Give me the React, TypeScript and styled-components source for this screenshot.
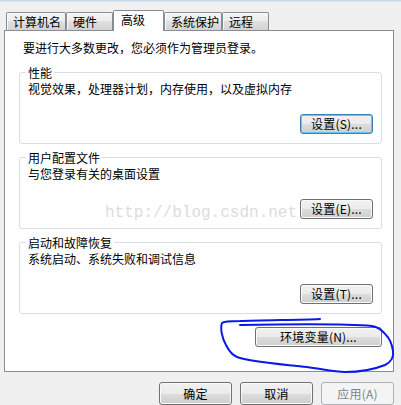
import React from "react";
import styled, { createGlobalStyle, css } from "styled-components";

const GlobalStyle = createGlobalStyle`
  html, body {
    margin: 0;
    padding: 0;
    background: #f0f0f0;
  }
  body {
    font-family: "Noto Sans CJK SC", "Noto Sans", sans-serif;
    font-size: 12px;
    color: #000;
  }
`;

const Frame = styled.div`
  position: relative;
  width: 401px;
  height: 405px;
  overflow: hidden;
  background: #f0f0f0;
  display: flex;
  flex-direction: column;
`;

const TitleBand = styled.div`
  height: 7px;
  background: linear-gradient(#bcd3ea, #e6edf5);
`;

const Body = styled.div`
  display: flex;
  flex-direction: column;
  padding: 0 7px 0 4px;
`;

const TabRow = styled.div`
  position: relative;
  z-index: 1;
  margin-top: 8px;
  padding-left: 2px;
  height: 21px;
  display: flex;
  align-items: flex-end;
`;

const Tab = styled.div<{ $w: number; $active?: boolean }>`
  box-sizing: border-box;
  width: ${(p) => p.$w}px;
  border: 1px solid #898c95;
  border-bottom: none;
  border-radius: 2px 2px 0 0;
  white-space: nowrap;
  ${(p) =>
    p.$active
      ? css`
          height: 21px;
          background: #fff;
          padding-left: 7px;
          line-height: 18px;
        `
      : css`
          height: 18px;
          margin-bottom: 1px;
          padding-left: 6px;
          line-height: 18px;
          background: linear-gradient(#f4f4f4 0%, #ececec 50%, #e0e0e0 50%, #d3d3d3 100%);
          box-shadow: inset 1px 1px 0 #fbfbfb;
        `}
`;

const Panel = styled.div`
  margin-top: -1px;
  box-sizing: border-box;
  height: 342px;
  border: 1px solid #898c95;
  background: #fff;
  padding: 10px 11px 0 14px;
  display: flex;
  flex-direction: column;
`;

const Intro = styled.div`
  margin-left: 4px;
  line-height: 14px;
  height: 14px;
  white-space: nowrap;
`;

const GroupList = styled.div`
  margin-top: 17px;
  display: flex;
  flex-direction: column;
  gap: 13px;
`;

const GroupBox = styled.section`
  box-sizing: border-box;
  height: 72px;
  border: 1px solid #d5dfe5;
  border-radius: 3px;
  padding: 0 8px 9px 8px;
  display: flex;
  flex-direction: column;
`;

const GroupTitle = styled.div`
  align-self: flex-start;
  margin: -7px 0 0 -2px;
  padding: 0 2px;
  line-height: 13px;
  background: #fff;
  white-space: nowrap;
`;

const GroupText = styled.div`
  margin-top: 3px;
  line-height: 14px;
  white-space: nowrap;
`;

const ButtonRow = styled.div<{ $top?: number }>`
  display: flex;
  justify-content: flex-end;
  gap: 8px;
  margin-top: ${(p) => (p.$top !== undefined ? `${p.$top}px` : "auto")};
`;

const Button = styled.button<{ $w: number; $h?: number; $focus?: boolean }>`
  position: relative;
  box-sizing: border-box;
  width: ${(p) => p.$w}px;
  height: ${(p) => p.$h ?? 20}px;
  padding: 0;
  font-family: "Noto Sans CJK SC", "Noto Sans", sans-serif;
  font-size: 12px;
  line-height: 1;
  color: #000;
  border: 1px solid #707070;
  border-radius: 3px;
  background: linear-gradient(#f2f2f2 0%, #ebebeb 50%, #dddddd 50%, #cfcfcf 100%);
  box-shadow: inset 0 0 0 1px #fafafa;
  white-space: nowrap;
  letter-spacing: 0.2px;
  ${(p) =>
    p.$focus &&
    css`
      border-color: #3c7fb1;
      box-shadow: inset 0 0 0 1px #62c6f2;
    `}
  &:disabled {
    border-color: #adb2b5;
    background: #f4f4f4;
    box-shadow: none;
    color: #838383;
  }
`;

const Footer = styled.div`
  margin-top: 10px;
  display: flex;
  justify-content: flex-end;
  gap: 8px;
`;

const Watermark = styled.div`
  position: absolute;
  left: 105px;
  top: 203px;
  font-family: "Liberation Mono", monospace;
  font-size: 16px;
  line-height: 20px;
  color: #dcdcdc;
  white-space: nowrap;
`;

const Scribble = styled.svg`
  position: absolute;
  left: 0;
  top: 0;
  width: 401px;
  height: 405px;
  pointer-events: none;
  z-index: 5;
`;

const groups = [
  { title: "性能", text: "视觉效果，处理器计划，内存使用，以及虚拟内存", button: "设置(S)...", focus: true },
  { title: "用户配置文件", text: "与您登录有关的桌面设置", button: "设置(E)..." },
  { title: "启动和故障恢复", text: "系统启动、系统失败和调试信息", button: "设置(T)..." },
];

const tabs = [
  { label: "计算机名", w: 60 },
  { label: "硬件", w: 47 },
  { label: "高级", w: 51, active: true },
  { label: "系统保护", w: 58 },
  { label: "远程", w: 47 },
];

export default function App() {
  return (
    <>
      <GlobalStyle />
      <Frame>
        <TitleBand />
        <Body>
          <TabRow>
            {tabs.map((t) => (
              <Tab key={t.label} $w={t.w} $active={t.active}>
                {t.label}
              </Tab>
            ))}
          </TabRow>
          <Panel>
            <Intro>要进行大多数更改，您必须作为管理员登录。</Intro>
            <GroupList>
              {groups.map((g) => (
                <GroupBox key={g.title}>
                  <GroupTitle>{g.title}</GroupTitle>
                  <GroupText>{g.text}</GroupText>
                  <ButtonRow>
                    <Button $w={73} $focus={g.focus}>
                      {g.button}
                    </Button>
                  </ButtonRow>
                </GroupBox>
              ))}
            </GroupList>
            <ButtonRow $top={13}>
              <Button $w={127}>环境变量(N)...</Button>
            </ButtonRow>
          </Panel>
          <Footer>
            <Button $w={73} $h={23}>确定</Button>
            <Button $w={73} $h={23}>取消</Button>
            <Button $w={73} $h={23} disabled>
              应用(A)
            </Button>
          </Footer>
        </Body>
        <Watermark>http://blog.csdn.net</Watermark>
        <Scribble viewBox="0 0 401 405">
          <path
            d="M320 319 C300 320 260 320 240 321 C230 321 224 321 222 323 C220 328 222 338 226 345 C229 351 232 355 237 357 C250 362 280 364 307 367 C322 369 335 372 345 372 C360 372 375 369 385 365 C391 362 394 357 393 351 C392 344 390 339 386 335 C382 330 378 327 372 326 C350 324 300 324 240 325"
            fill="none"
            stroke="#0a18e8"
            strokeWidth="2"
            strokeLinecap="round"
            strokeLinejoin="round"
          />
        </Scribble>
      </Frame>
    </>
  );
}
